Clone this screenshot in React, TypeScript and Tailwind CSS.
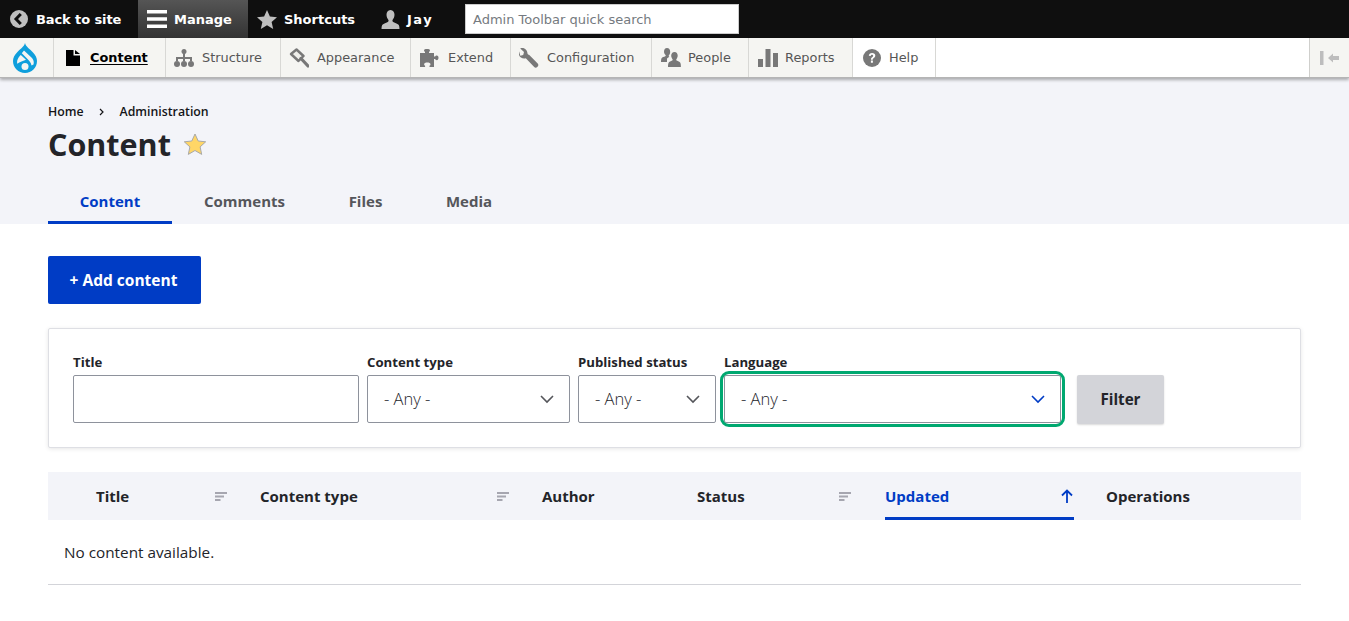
import React from "react";

const TopItem = ({ icon, label, active, w, extra = "" }: { icon: React.ReactNode; label: string; active?: boolean; w: string; extra?: string }) => (
  <div className={`${w} h-full flex items-center shrink-0 ${active ? "bg-gradient-to-b from-[#555555] to-[#333333]" : ""}`}>
    {icon}
    <span className={`text-white font-bold text-[13px] leading-none ${extra}`}>{label}</span>
  </div>
);

const NavItem = ({ icon, label, w, active, white }: { icon: React.ReactNode; label: string; w: string; active?: boolean; white?: boolean }) => (
  <div className={`${w} h-full flex items-center shrink-0 border-r border-[#d8d8d5] ${white ? "bg-white" : "bg-[#f5f5f2]"}`}>
    {icon}
    <span className={`text-[12.9px] leading-none pt-[1px] ${active ? "text-black font-bold underline underline-offset-2" : "text-[#565656]"}`}>{label}</span>
  </div>
);

const SortIcon = () => (
  <svg width="12" height="9" viewBox="0 0 12 9" className="shrink-0">
    <path d="M0 0h12v2H0zM0 3.500h9v2H0zM0 7h5.500v2H0z" fill="#a6a6b0" />
  </svg>
);

const Chevron = ({ color }: { color: string }) => (
  <svg width="14" height="9" viewBox="0 0 14 9" className="shrink-0">
    <path d="M1 1l6 6 6-6" fill="none" stroke={color} strokeWidth="1.600" />
  </svg>
);

const Select = ({ color = "#55565b" }: { color?: string }) => (
  <div className="w-full h-12 bg-white border border-[#8e929c] rounded-[2px] flex items-center justify-between pl-4 pr-[15px]">
    <span className="text-[16.500px] font-light leading-none text-[#232429]">- Any -</span>
    <Chevron color={color} />
  </div>
);

const Label = ({ children }: { children: React.ReactNode }) => (
  <div className="text-[13.200px] font-bold text-[#232429] leading-[16px] h-[16px] mb-[5px]">{children}</div>
);

const fill = "#787878";

export default function App() {
  return (
    <div className="w-full min-h-[621px] bg-white overflow-hidden font-['Open_Sans','Noto_Sans',sans-serif]">
      <div className="font-['DejaVu_Sans',sans-serif]">
        <div className="h-[38px] bg-[#0f0f0f] flex items-center">
          <TopItem
            w="w-[138px]"
            label="Back to site"
            extra="tracking-[-0.1px]"
            icon={
              <svg width="18" height="18" viewBox="0 0 18 18" className="ml-[10px] mr-[8px]">
                <circle cx="9" cy="9" r="9" fill="#bfbfbf" />
                <path d="M10.800 4L6 9l4.800 5" fill="none" stroke="#0f0f0f" strokeWidth="3" />
              </svg>
            }
          />
          <TopItem
            w="w-[110px]"
            active
            label="Manage"
            icon={
              <svg width="20" height="18" viewBox="0 0 20 18" className="ml-[9px] mr-[7px]">
                <path d="M0 0h20v3.600H0zM0 7.200h20v3.600H0zM0 14.400h20V18H0z" fill="#fff" />
              </svg>
            }
          />
          <TopItem
            w="w-[122px]"
            label="Shortcuts"
            icon={
              <svg width="20" height="19" viewBox="0 0 20 19" className="ml-[9px] mr-[7px]">
                <path d="M10 0l2.900 6.500 7.100.7-5.400 4.700 1.600 7L10 15.300 3.800 18.900l1.600-7L0 7.200l7.100-.7z" fill="#bfbfbf" />
              </svg>
            }
          />
          <TopItem
            w="w-[95px]"
            label="Jay"
            extra="tracking-[1.500px]"
            icon={
              <svg width="19" height="19" viewBox="0 0 19 19" className="ml-[11px] mr-[7px]">
                <path d="M9.500 0c2.700 0 4 2.200 4 4.800 0 2.300-1 4-1.800 5-.5.700-.3 1.700.5 2.100 2 1 4.800 1.700 5.600 3.200.5 1 .7 2.400.7 3.900H.5c0-1.500.2-2.900.7-3.900.8-1.500 3.600-2.200 5.600-3.200.8-.4 1-1.400.5-2.100-.8-1-1.800-2.700-1.800-5C5.500 2.200 6.800 0 9.500 0z" fill="#bfbfbf" />
              </svg>
            }
          />
          <div className="w-[274px] h-[30px] bg-white border border-[#cccccc] flex items-center pl-[7px] shrink-0">
            <span className="text-[13px] text-[#757a80] leading-none">Admin Toolbar quick search</span>
          </div>
        </div>
        <div className="h-[40px] bg-white border-b border-[#b5b5b5] shadow-[0_2px_3px_rgba(0,0,0,0.3)] relative z-10 flex">
          <div className="w-[54px] h-full bg-[#f5f5f2] border-r border-[#d8d8d5] flex items-center pl-[13px] shrink-0">
            <svg width="24" height="30" viewBox="0 0 24 30" className="mt-[1px]">
              <path d="M12 0C13 4 17 6 20 9.500C22.500 12 24 15 24 18C24 24.600 18.600 30 12 30S0 24.600 0 18C0 15 1.500 12 4 9.500C7 6 11 4 12 0z" fill="#0f9fdc" />
              <path d="M11 7.500L19 15C20.600 16.800 21.200 19 20.500 21.500L18.500 22.500C18 19.800 16.500 17.800 14.500 16L8.800 10.300z" fill="#f5f5f2" />
              <path d="M7.800 12L13 16.800L8.500 18.500C6.800 19.100 5.500 19.800 4.300 20.800C3.500 17.300 5.500 14.200 7.800 12z" fill="#f5f5f2" />
              <circle cx="12" cy="23.500" r="3.500" fill="#f5f5f2" />
            </svg>
          </div>
          <NavItem
            w="w-[112px]"
            active
            label="Content"
            icon={
              <svg width="14" height="16" viewBox="0 0 14 16" className="ml-[12px] mr-[10px] shrink-0">
                <path d="M0 0h7.500v5.500H14V16H0zM9 0l5 4H9z" fill="#000" />
              </svg>
            }
          />
          <NavItem
            w="w-[115px]"
            label="Structure"
            icon={
              <svg width="20" height="18" viewBox="0 0 20 18" className="ml-[8px] mr-[8px] shrink-0">
                <circle cx="10" cy="2.500" r="2.500" fill={fill} />
                <path d="M9 4h2v4h7v4h-2v-2h-5v2H9v-2H4v2H2V8h7z" fill={fill} />
                <circle cx="3" cy="15" r="3" fill={fill} />
                <circle cx="10" cy="15" r="3" fill={fill} />
                <circle cx="17" cy="15" r="3" fill={fill} />
              </svg>
            }
          />
          <NavItem
            w="w-[130px]"
            label="Appearance"
            icon={
              <svg width="20" height="20" viewBox="0 0 20 20" className="ml-[8px] mr-[8px] shrink-0">
                <path d="M7.500 1.500L14.500 8L9.500 13L2 6z" fill="#eeeeea" stroke={fill} strokeWidth="2.400" strokeLinejoin="round" />
                <path d="M12 10.500L19 18" fill="none" stroke={fill} strokeWidth="3.200" strokeLinecap="round" />
              </svg>
            }
          />
          <NavItem
            w="w-[100px]"
            label="Extend"
            icon={
              <svg width="20" height="18" viewBox="0 0 20 18" className="ml-[9px] mr-[8px] shrink-0">
                <path d="M5 4V3C4.400 2.500 4 2 4 1.300 4 .4 5.400 0 7 0s3 .4 3 1.300C10 2 9.600 2.500 9 3v1h5v3.500h1c.5-.5 1-1 1.800-1 .9 0 1.700.9 1.700 2.300s-.8 2.400-1.700 2.400c-.8 0-1.300-.5-1.800-1.100h-1V18H9.500v-1.200c.6-.4 1-.9 1-1.600 0-1-1.400-1.700-3.200-1.700s-3.200.7-3.200 1.700c0 .7.400 1.200 1 1.600V18H0V4z" fill={fill} />
              </svg>
            }
          />
          <NavItem
            w="w-[141px]"
            label="Configuration"
            icon={
              <svg width="20" height="20" viewBox="0 0 20 20" className="ml-[8px] mr-[8px] shrink-0">
                <path d="M8.500 5.500C8.500 2.500 6.200 0 3.200 0 2.500 0 1.800.1 1.200.4L5 4l-.8 2.900-2.900.8L.1 3.600C-.1 4.200-.3 4.700-.3 5.300c0 3 2.500 5.200 5.500 5.200.5 0 1.100 0 1.600-.2l8.400 8.700c.8.900 2.100.9 3 0l.5-.5c.9-.9.800-2.200 0-3L10.300 7C9.600 6.800 8.500 6.200 8.500 5.500z" fill={fill} />
              </svg>
            }
          />
          <NavItem
            w="w-[97px]"
            label="People"
            icon={
              <svg width="20" height="19" viewBox="0 0 20 19" className="ml-[9px] mr-[7px] shrink-0">
                <path d="M6 0c2 0 3.200 1.600 3.200 3.700 0 1.700-.7 3-1.400 3.800-.3.500 0 1 .5 1.300L6 10.500v3.500H0c0-1.800.2-3 .6-3.700.6-1 2.400-1.400 3.700-2 .5-.3.600-.9.300-1.300C3.900 6.500 3 5.300 3 3.700 3 1.600 4 0 6 0z" fill={fill} />
                <path d="M13.500 4c2 0 3.200 1.600 3.200 3.600 0 1.600-.7 2.800-1.300 3.600-.4.500-.2 1.100.3 1.400 1.400.7 3 1 3.600 2.100.4.700.6 2.100.6 4.300H7c0-2.200.2-3.600.6-4.300.6-1.100 2.200-1.400 3.600-2.100.5-.3.700-.9.300-1.400-.6-.8-1.300-2-1.300-3.600C10.200 5.600 11.500 4 13.500 4z" fill={fill} />
              </svg>
            }
          />
          <NavItem
            w="w-[104px]"
            label="Reports"
            icon={
              <svg width="20" height="18" viewBox="0 0 20 18" className="ml-[9px] mr-[7px] shrink-0">
                <path d="M0 10h5v8H0zM7.500 0h5v18h-5zM15 4h5v14h-5z" fill={fill} />
              </svg>
            }
          />
          <NavItem
            w="w-[83px]"
            white
            label="Help"
            icon={
              <svg width="18" height="18" viewBox="0 0 18 18" className="ml-[10px] mr-[8px] shrink-0">
                <circle cx="9" cy="9" r="9" fill={fill} />
                <path d="M5.800 6.800C5.900 5 7.200 3.900 9.100 3.900c1.900 0 3.200 1.100 3.200 2.700 0 1.200-.6 1.900-1.500 2.500-.9.600-1 .9-1 1.700H8c-.1-1.300.2-1.900 1.200-2.600.7-.5 1-.8 1-1.400 0-.7-.5-1.100-1.200-1.100-.8 0-1.200.5-1.300 1.300zM7.900 11.600h2v2.200h-2z" fill="#fff" />
              </svg>
            }
          />
          <div className="flex-1" />
          <div className="w-[40px] h-full bg-[#f5f5f2] border-l border-[#cfcfcc] flex items-center justify-center shrink-0">
            <svg width="20" height="14" viewBox="0 0 20 14">
              <path d="M0 0h3.500v14H0zM8 7l5-4.500V5h6v4h-6v2.500z" fill="#bdbdbd" />
            </svg>
          </div>
        </div>
      </div>

      <div className="bg-[#f3f4f9] h-[146px] pl-[48px] pt-[25px] flex flex-col">
        <div className="flex items-center text-[12.300px] font-semibold text-[#141418] leading-[18px] h-[18px]">
          <span>Home</span>
          <svg width="6" height="8" viewBox="0 0 6 8" className="mx-[15px]">
            <path d="M1 1l3 3-3 3" fill="none" stroke="#141418" strokeWidth="1.200" />
          </svg>
          <span>Administration</span>
        </div>
        <div className="flex items-center h-[40px] mt-[3px]">
          <h1 className="text-[30.500px] leading-none font-bold text-[#232429]">Content</h1>
          <svg width="24" height="23" viewBox="0 0 24 23" className="ml-[12px]">
            <path d="M12 1l3.200 7 7.500.8-5.600 5.100 1.600 7.500-6.700-3.900-6.700 3.900 1.600-7.500-5.600-5.100 7.500-.8z" fill="#ffd667" stroke="#a9a9a9" strokeWidth="1" />
          </svg>
        </div>
        <div className="flex mt-auto h-[47px] text-[15px] font-bold leading-none">
          <div className="w-[124px] flex items-center justify-center text-[#003cc5] border-b-[3px] border-[#003cc5] pt-[4px]">Content</div>
          <div className="w-[145px] flex items-center justify-center text-[#55565b] pt-[1px]">Comments</div>
          <div className="w-[97px] flex items-center justify-center text-[#55565b] pt-[1px]">Files</div>
          <div className="w-[110px] flex items-center justify-center text-[#55565b] pt-[1px]">Media</div>
        </div>
      </div>

      <div className="px-[48px] pt-[32px] bg-white">
        <div className="w-[153px] h-12 bg-[#003cc5] rounded-[2px] flex items-center justify-center text-white font-bold text-[15.500px] leading-none pt-[1px] pr-[2px]">+ Add content</div>

        <div className="mt-6 h-[120px] bg-white border border-[#dedfe4] rounded-[2px] shadow-[0_1px_4px_rgba(0,0,0,0.1)] pl-6 pt-[25px] flex items-start">
          <div className="w-[286px]">
            <Label>Title</Label>
            <div className="h-12 bg-white border border-[#8e929c] rounded-[2px]" />
          </div>
          <div className="ml-2 w-[203px]">
            <Label>Content type</Label>
            <Select />
          </div>
          <div className="ml-2 w-[138px]">
            <Label>Published status</Label>
            <Select />
          </div>
          <div className="ml-2 w-[337px]">
            <Label>Language</Label>
            <div className="rounded-[5px] outline-[3px] outline outline-[#00a870] outline-offset-[1px]">
              <Select color="#003cc5" />
            </div>
          </div>
          <div className="ml-4 mt-[21px] w-[87px] h-[49px] bg-[#d3d4d9] rounded-[2px] shadow-[0_1px_2px_rgba(0,0,0,0.15)] flex items-center justify-center font-bold text-[#232429] text-[15.200px] leading-none">Filter</div>
        </div>

        <div className="mt-6 h-12 bg-[#f3f4f9] flex text-[15px] font-bold text-[#232429] leading-none">
          <div className="w-[180px] pl-[48px] pr-[1px] flex items-center justify-between shrink-0">
            <span>Title</span>
            <SortIcon />
          </div>
          <div className="w-[282px] pl-[32px] pr-[1px] flex items-center justify-between shrink-0">
            <span>Content type</span>
            <SortIcon />
          </div>
          <div className="w-[155px] pl-[32px] flex items-center shrink-0">
            <span>Author</span>
          </div>
          <div className="w-[187px] pl-[32px] pr-[1px] flex items-center justify-between shrink-0">
            <span>Status</span>
            <SortIcon />
          </div>
          <div className="ml-[33px] w-[189px] flex items-center justify-between shrink-0 border-b-[3px] border-[#003cc5] text-[#003cc5] pt-[3px]">
            <span>Updated</span>
            <svg width="12" height="14" viewBox="0 0 12 14" className="mr-[1px]">
              <path d="M6 14V1.500M1 6.500l5-5 5 5" fill="none" stroke="#003cc5" strokeWidth="1.800" />
            </svg>
          </div>
          <div className="pl-[32px] flex items-center shrink-0">
            <span>Operations</span>
          </div>
        </div>
        <div className="h-[65px] border-b border-[#d3d4d9] pl-4 pt-[1px] flex items-center text-[#232429] text-[15.300px] leading-none">No content available.</div>
      </div>
    </div>
  );
}
